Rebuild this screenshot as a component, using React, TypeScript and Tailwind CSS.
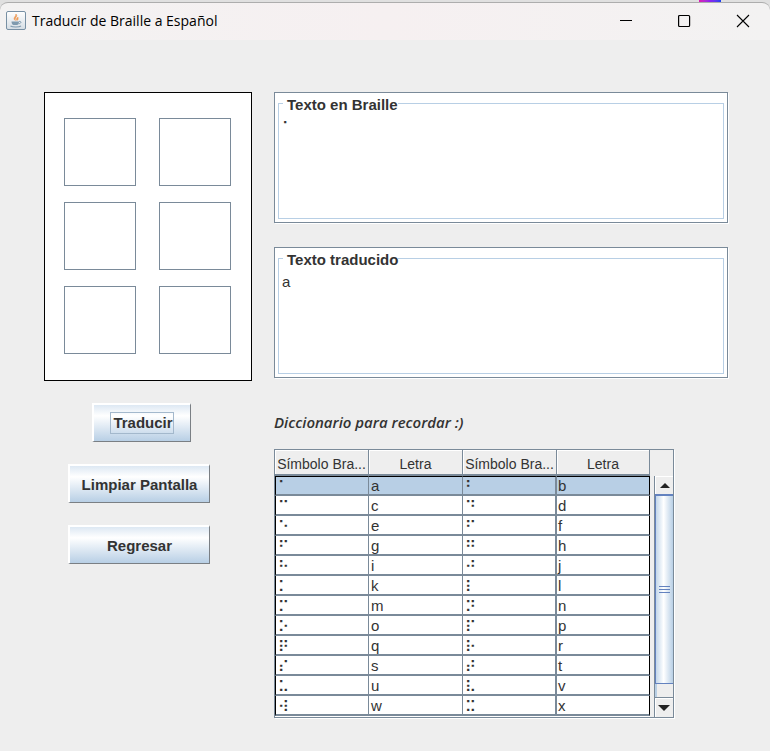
import React from "react";

const rows = [
  ["⠁", "a", "⠃", "b"],
  ["⠉", "c", "⠙", "d"],
  ["⠑", "e", "⠋", "f"],
  ["⠋", "g", "⠛", "h"],
  ["⠓", "i", "⠚", "j"],
  ["⠅", "k", "⠇", "l"],
  ["⠍", "m", "⠝", "n"],
  ["⠕", "o", "⠏", "p"],
  ["⠟", "q", "⠗", "r"],
  ["⠎", "s", "⠞", "t"],
  ["⠥", "u", "⠧", "v"],
  ["⠺", "w", "⠭", "x"],
];

function JavaIcon() {
  return (
    <svg width="20" height="20" viewBox="0 0 20 20" aria-hidden="true">
      <defs>
        <linearGradient id="tile" x1="0" y1="0" x2="0" y2="1">
          <stop offset="0" stopColor="#ffffff" />
          <stop offset="1" stopColor="#d5dde4" />
        </linearGradient>
      </defs>
      <rect x="0.5" y="0.5" width="19" height="18" rx="1.5" fill="url(#tile)" stroke="#7890a4" />
      <path d="M9.3 9.5C6 7 10.500 5.500 9.800 3c2.700 2-1.300 3.500-.5 6.500zM11 9.500c-1.500-2 .5-2.500 1-3.500-.3 1.500 1 2-1 3.500z" fill="#ee9a56" stroke="#ee9a56" strokeWidth=".6" />
      <path d="M5.500 10.500h7.500c0 2-1 3.500-2 3.500h-3.500c-1 0-2-1.500-2-3.500z" fill="#7f9aae" />
      <path d="M13 10.500c2.800-.5 2.500 2-.5 2.300" fill="none" stroke="#7f9aae" />
      <path d="M4.500 15c2 1.300 8.500 1.300 10.500 0" fill="none" stroke="#7f9aae" strokeWidth="1.200" />
    </svg>
  );
}

function TitleBar() {
  return (
    <div className="bg-[#e0e0e0]">
      <div className="flex h-[2px] justify-end pr-[49px]">
        <div className="w-[22px] bg-gradient-to-r from-[#e010b0] via-[#8a20f0] to-[#1040f0]" />
      </div>
      <header className="flex h-[38px] items-center rounded-t-lg border-t border-[#adadad] bg-gradient-to-r from-[#f3f2f2] via-[#f6f0f1] to-[#f3f2f2] pb-[2px] pl-[6px] text-black">
        <JavaIcon />
        <h1 className="flex-1 pt-px pl-[6px] font-['Open_Sans',sans-serif] text-sm font-normal">Traducir de Braille a Español</h1>
        <div className="flex h-full gap-1">
          <button type="button" aria-label="Minimizar" className="grid w-[54px] place-items-center">
            <svg width="14" height="14" viewBox="0 0 14 14"><path d="M0 6.500h12" stroke="#000" /></svg>
          </button>
          <button type="button" aria-label="Maximizar" className="grid w-[54px] place-items-center">
            <svg width="14" height="14" viewBox="0 0 14 14"><rect x="0.600" y="1.500" width="11" height="11" rx="1" fill="none" stroke="#000" strokeWidth="1.200" /></svg>
          </button>
          <button type="button" aria-label="Cerrar" className="grid w-[54px] place-items-center">
            <svg width="14" height="14" viewBox="0 0 14 14"><path d="M1 1l12 12M13 1L1 13" stroke="#000" strokeWidth="1.100" /></svg>
          </button>
        </div>
      </header>
    </div>
  );
}

function TextPanel({ id, title, value, braille }: { id: string; title: string; value: string; braille?: boolean }) {
  return (
    <div className="h-[131px] border border-[#7a8a99] bg-white px-[3px] pt-px pb-[3px] shadow-[1px_1px_0_#ffffff]">
      <fieldset className="flex h-full flex-col border border-[#b8cfe5] pl-1">
        <legend className="pt-[2px] pl-1 text-[15px] leading-[17px] font-bold">
          <label htmlFor={id}>{title}</label>
        </legend>
        <textarea
          id={id}
          defaultValue={value}
          className={
            braille
              ? "-ml-1 block w-full flex-1 resize-none bg-transparent pt-[5px] pl-[3px] font-['DejaVu_Sans',sans-serif] text-[15px] leading-5 outline-none"
              : "-ml-1 block w-full flex-1 resize-none bg-transparent pt-1 pl-[3px] text-[15px] leading-5 outline-none"
          }
        />
      </fieldset>
    </div>
  );
}

function MetalButton({ children, className, focused }: { children: string; className: string; focused?: boolean }) {
  return (
    <button
      type="button"
      className={
        "flex h-[39px] items-center justify-center border-t-2 border-r border-b border-l-2 border-t-white border-r-[#7a7f84] border-b-[#7a7f84] border-l-white bg-gradient-to-b from-[#dde8f3] via-white via-30% to-[#b8cfe5] text-[15px] font-bold " +
        className
      }
    >
      <span className={focused ? "border border-[#a3b8cc] pl-[2px] leading-5" : "pt-px leading-5"}>{children}</span>
    </button>
  );
}

function Dictionary() {
  const vertical = ["border-r border-l border-l-black", "border-r", "border-r-2", "border-r border-r-black"];
  return (
    <div className="flex h-[269px] w-full max-w-[400px] border border-[#7a8a99] bg-[#eeeeee] shadow-[1px_1px_0_#ffffff]">
      <div className="min-w-0 flex-1 overflow-hidden bg-white">
        <table aria-labelledby="dictionary-title" className="w-full table-fixed border-separate border-spacing-0 text-[15px] leading-[17px]">
          <colgroup>
            <col className="w-[94px]" />
            <col className="w-[94px]" />
            <col className="w-[94px]" />
            <col />
          </colgroup>
          <thead>
            <tr className="h-[26px] bg-[#eeeeee]">
              {["Símbolo Bra...", "Letra", "Símbolo Bra...", "Letra"].map((name, i) => (
                <th key={i} scope="col" className="border-r border-b-2 border-[#7a8a99] p-0 pt-1 text-sm leading-[17px] font-normal whitespace-nowrap shadow-[inset_1px_1px_0_#ffffff]">
                  {name}
                </th>
              ))}
            </tr>
          </thead>
          <tbody>
            {rows.map((row, r) => (
              <tr key={r} className={r === 0 ? "h-5 bg-[#b8cfe5]" : "h-5 bg-white"}>
                {row.map((cell, c) => (
                  <td
                    key={c}
                    className={
                      "h-5 border-b-2 border-[#7a8a99] p-0 " +
                      vertical[c] +
                      (r === 0 ? " border-t border-t-black" : " pt-px") +
                      (c % 2 === 0 ? " pl-px font-['DejaVu_Sans',sans-serif]" : c === 1 ? " pl-[2px]" : " pl-px")
                    }
                  >
                    {c % 2 === 0 ? <span className="block h-[17px] pt-[2px] pl-px leading-[17px]">{cell}</span> : cell}
                  </td>
                ))}
              </tr>
            ))}
          </tbody>
        </table>
      </div>
      <div className="flex w-[23px] flex-col pt-[26px] pl-1">
        <div className="flex min-h-0 flex-1 flex-col border-l border-[#7a8a99]">
          <button type="button" aria-label="Subir" className="grid h-[18px] place-items-center border-t border-l border-white">
            <svg width="10" height="5" viewBox="0 0 10 5"><path d="M5 0l5 5H0z" fill="#222" /></svg>
          </button>
          <div className="flex h-[190px] flex-col items-center justify-center gap-[2px] border-t-2 border-b border-l border-[#6382bf] bg-gradient-to-r from-[#c3d7ea] via-white via-45% to-[#b8cfe5]">
            <span className="h-px w-[11px] bg-[#6382bf]" />
            <span className="h-px w-[11px] bg-[#6382bf]" />
            <span className="h-px w-[11px] bg-[#6382bf]" />
          </div>
          <div className="flex-1 border-l-2 border-[#b8cfe5]" />
          <button type="button" aria-label="Bajar" className="grid h-[20px] place-items-center border-t border-[#7a8a99] shadow-[inset_1px_1px_0_#ffffff]">
            <svg width="12" height="6" viewBox="0 0 12 6"><path d="M0 0h12L6 6z" fill="#222" /></svg>
          </button>
        </div>
      </div>
    </div>
  );
}

export default function App() {
  return (
    <div className="min-h-screen bg-[#eeeeee] font-['Liberation_Sans',Arial,sans-serif] text-[#333333]">
      <TitleBar />
      <main className="flex gap-[22px] pt-[52px] pr-[42px] pb-8 pl-[44px]">
        <section className="w-[208px] shrink-0">
          <div className="grid grid-cols-2 gap-x-[23px] gap-y-4 border border-black bg-white pt-[25px] pr-5 pb-[26px] pl-[19px]">
            {[1, 4, 2, 5, 3, 6].map((dot) => (
              <button key={dot} type="button" aria-label={"Punto " + dot} className="h-[68px] border border-[#7a8a99] bg-white" />
            ))}
          </div>
          <div className="ml-6 flex w-[142px] flex-col gap-[22px] pt-[22px]">
            <MetalButton className="ml-6 w-[99px]" focused>Traducir</MetalButton>
            <MetalButton className="w-full">Limpiar Pantalla</MetalButton>
            <MetalButton className="w-full">Regresar</MetalButton>
          </div>
        </section>
        <section className="flex min-w-0 flex-1 flex-col">
          <div className="flex flex-col gap-6">
            <TextPanel id="braille" title="Texto en Braille" value="⠁" braille />
            <TextPanel id="translated" title="Texto traducido" value="a" />
          </div>
          <h2 id="dictionary-title" className="pt-[34px] pb-[17px] font-['Open_Sans',sans-serif] text-[15px] leading-5 font-semibold italic">
            Diccionario para recordar :)
          </h2>
          <Dictionary />
        </section>
      </main>
    </div>
  );
}
